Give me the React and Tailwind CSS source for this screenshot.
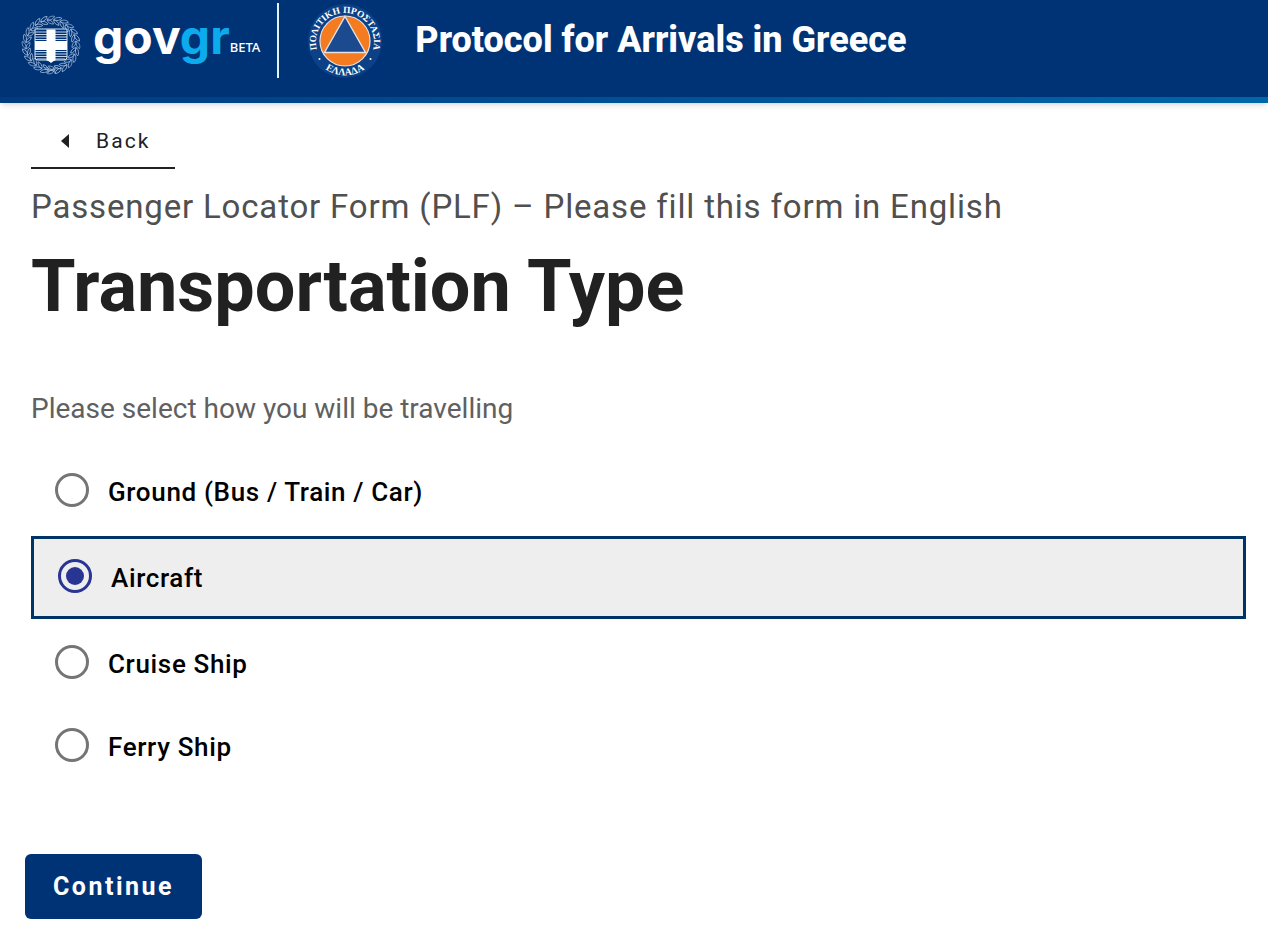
import React, { useState } from 'react';

const transportTypes = [
    { id: 'ground', label: 'Ground (Bus / Train / Car)' },
    { id: 'aircraft', label: 'Aircraft' },
    { id: 'cruise', label: 'Cruise Ship' },
    { id: 'ferry', label: 'Ferry Ship' },
];

// Leaves of the wreath, in degrees around the shield
const leafAngles = Array.from({ length: 24 }, (_, i) => i * 15);

const CoatOfArms = () => (
    <svg viewBox="0 0 60 60" className="size-[60px] shrink-0" fill="none" aria-hidden="true">
        <g stroke="#9db6d8" strokeWidth="0.8">
            {leafAngles.map((angle) => (
                <g key={angle} transform={`rotate(${angle} 30 30)`}>
                    <path d="M26 5C27.500 1.800 31 .6 33.600 1.400C32.400 4 29.500 5.500 26 5Z" />
                    <path d="M26 5C28.500 4.600 32 6.400 32.600 9C29.500 9.200 27 7.800 26 5Z" />
                </g>
            ))}
            <path d="M23 52Q30 59 37 52M25 58L35 52M35 58L25 52" />
        </g>
        <path d="M14 14H46V42Q46 45 43 45H35Q32 45 30 47.500Q28 45 25 45H17Q14 45 14 42Z" fill="#003375" stroke="#dce8f6" strokeWidth="1" />
        <path d="M14 17H46M14 19.500H46M14 22H46M14 24.500H46M14 36.500H46M14 39H46M14 41.500H46M16 44H44" stroke="#c3d5ed" strokeWidth="1.1" />
        <path d="M25.500 14.500H34.500V26H46V35H34.500V45L30 47.500L25.500 45V35H14V26H25.500Z" fill="#fff" />
    </svg>
);

const CivilProtection = () => (
    <svg viewBox="0 0 76 76" className="size-[76px] shrink-0" role="img" aria-label="Civil Protection">
        <defs>
            <path id="arcTop" d="M14.500 56A29 29 0 1 1 61.500 56" />
            <path id="arcBottom" d="M8 54.500A34.200 34.200 0 0 0 68 54.500" />
        </defs>
        <circle cx="38" cy="38" r="37" fill="#0c4187" />
        <circle cx="38" cy="38" r="25" fill="#f47b20" stroke="#e4e2e6" strokeWidth="1.2" />
        <path d="M38 13.500L58.500 49.500H17.500Z" fill="#1b4a8f" stroke="#e4e2e6" strokeWidth="1.4" />
        <g fill="#fff" fontFamily="Liberation Serif, serif" fontWeight="700" textAnchor="middle">
            <text fontSize="9.4"><textPath href="#arcTop" startOffset="50%">ΠΟΛΙΤΙΚΗ ΠΡΟΣΤΑΣΙΑ</textPath></text>
            <text fontSize="10"><textPath href="#arcBottom" startOffset="50%">ΕΛΛΑΔΑ</textPath></text>
        </g>
        <circle cx="12.500" cy="56" r="1" fill="#fff" />
        <circle cx="63.500" cy="56" r="1" fill="#fff" />
    </svg>
);

const Header = () => (
    <header className="bg-linear-to-r from-[#003b80] to-[#0067a8] pb-1.5 shadow-md">
        <div className="flex items-start bg-[#003375] pt-[3px] pb-[18px] pl-[21px]">
            <a href="#home" className="flex items-start pt-3">
                <CoatOfArms />
                <span className="ml-3 font-['Inter'] text-5xl leading-[44px] font-bold text-white">
                    gov<span className="text-[#0cabed]">gr</span>
                </span>
                <span className="pt-5 font-['Noto_Sans'] text-[13px] leading-6 font-medium text-white">BETA</span>
            </a>
            <div className="ml-[17px] h-[75px] w-0.5 shrink-0 bg-[#dff3fb]" />
            <div className="ml-7">
                <CivilProtection />
            </div>
            <span className="ml-8 pt-3 font-['Roboto'] text-4xl leading-[50px] font-extrabold text-white">
                Protocol for Arrivals in Greece
            </span>
        </div>
    </header>
);

const App = () => {
    const [selected, setSelected] = useState('aircraft');

    return (
        <div className="min-h-screen bg-white font-['Roboto'] text-[#212121]">
            <Header />

            <main className="pt-2 pr-[22px] pb-4 pl-[31px]">
                <a href="#back" className="inline-flex items-center gap-[27px] border-b-2 border-[#212121] pt-3.5 pb-2.5 pr-6 pl-[30px] text-[21px] leading-8 tracking-widest">
                    <svg viewBox="0 0 8 14" className="h-3.5 w-2" fill="currentColor" aria-hidden="true">
                        <path d="M8 0V14L0 7Z" />
                    </svg>
                    Back
                </a>

                <p className="mt-4 text-[33px] leading-[44px] tracking-wide text-[#505050]">
                    Passenger Locator Form (PLF) – Please fill this form in English
                </p>
                <h1 className="mt-[18px] text-7xl leading-[80px] font-bold">Transportation Type</h1>

                <fieldset className="mt-[62px]">
                    <legend className="mb-6 text-[28px] leading-10 text-[#606060]">
                        Please select how you will be travelling
                    </legend>
                    <div className="flex flex-col gap-1.5">
                        {transportTypes.map((type) => (
                            <label
                                key={type.id}
                                className={`flex items-start gap-[19px] px-6 pt-5 pb-[21px] text-[26px] leading-[34px] font-medium tracking-wide text-black ${selected === type.id ? 'border-[3px] border-[#003366] bg-[#eeeeee]' : ''
                                    }`}
                            >
                                <input
                                    type="radio"
                                    name="transport"
                                    value={type.id}
                                    checked={selected === type.id}
                                    onChange={() => setSelected(type.id)}
                                    className="size-[34px] shrink-0 appearance-none rounded-full border-[3px] border-[#757575] bg-clip-content p-[5px] checked:border-[#283593] checked:bg-[#283593]"
                                />
                                <span className="pt-0.5">{type.label}</span>
                            </label>
                        ))}
                    </div>
                </fieldset>

                <button type="button" className="-ml-1.5 mt-[69px] rounded-md bg-[#003375] px-7 py-4 text-[25px] leading-[33px] font-bold tracking-widest text-white">
                    Continue
                </button>
            </main>
        </div>
    );
};

export default App;
